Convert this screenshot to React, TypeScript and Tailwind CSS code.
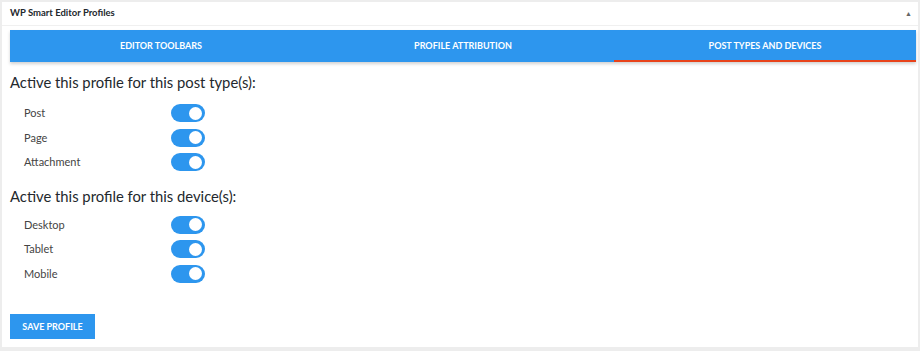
import React from 'react';

const postTypes = ['Post', 'Page', 'Attachment'];
const devices = ['Desktop', 'Tablet', 'Mobile'];
const tabs = ['EDITOR TOOLBARS', 'PROFILE ATTRIBUTION', 'POST TYPES AND DEVICES'];

const Toggle = () => (
  <div className="w-[34px] h-[18px] rounded-full bg-[#2d96ee] flex items-center justify-end pr-[3px]">
    <div className="w-[13px] h-[13px] rounded-full bg-white" />
  </div>
);

const Row = ({ label }: { label: string }) => (
  <div className="flex items-center h-[24.5px]">
    <span className="w-[161px] pl-[14px] text-[11px] text-[#444]">{label}</span>
    <Toggle />
  </div>
);

const App = () => {
  return (
    <div className="w-[920px] h-[351px] bg-[#ededed] pt-[2px] pl-[2px] font-['Lato',sans-serif]">
      <div className="w-[916px] h-[345px] bg-white flex flex-col">
        {/* Header */}
        <div className="h-[24px] flex items-center justify-between px-[8px] border-b border-[#f0f0f0]">
          <span className="text-[9.5px] font-bold text-[#23282d]">WP Smart Editor Profiles</span>
          <span className="text-[7px] text-[#666] mr-[-2px]">▲</span>
        </div>

        {/* Tabs */}
        <div className="mt-[4px] ml-[8px] mr-[2px] h-[32px] bg-[#2d96ee] flex shadow-[0_2px_3px_rgba(0,0,0,0.18)]">
          {tabs.map((t, i) => (
            <div
              key={t}
              className={
                'flex-1 flex items-center justify-center text-[9px] font-bold text-white ' +
                (i === 2 ? 'border-b-[2px] border-[#e8431a] pt-[2px]' : '')
              }
            >
              {t}
            </div>
          ))}
        </div>

        {/* Content */}
        <div className="px-[8px] pt-[10px]">
          <h2 className="text-[14.8px] text-[#23282d] leading-[20px]">Active this profile for this post type(s):</h2>
          <div className="mt-[9px]">
            {postTypes.map((p) => (
              <Row key={p} label={p} />
            ))}
          </div>

          <h2 className="mt-[11px] text-[14.8px] text-[#23282d] leading-[20px]">Active this profile for this device(s):</h2>
          <div className="mt-[7px]">
            {devices.map((d) => (
              <Row key={d} label={d} />
            ))}
          </div>

          <button className="mt-[28px] w-[85px] h-[25px] bg-[#2d96ee] text-white text-[9px] font-bold flex items-center justify-center">
            SAVE PROFILE
          </button>
        </div>
      </div>
    </div>
  );
};

export default App;
